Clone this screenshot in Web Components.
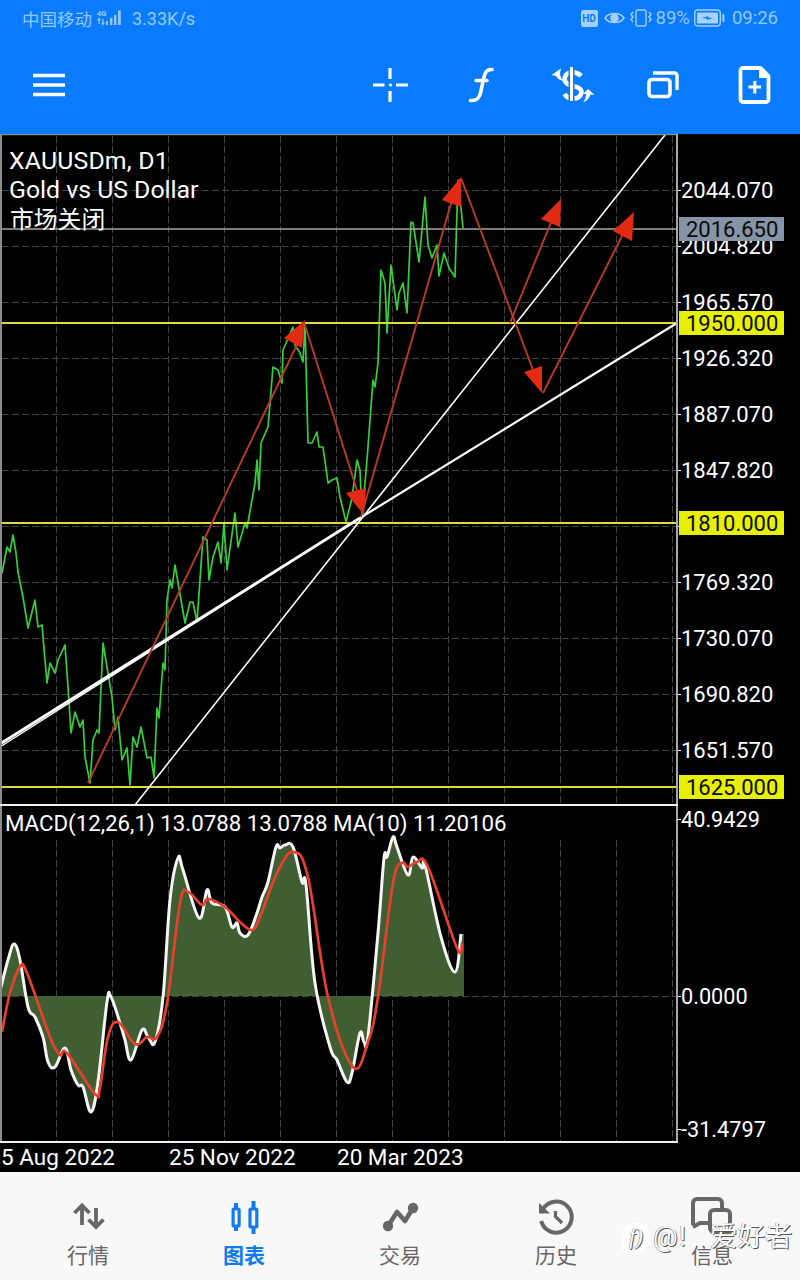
<!DOCTYPE html>
<html lang="zh">
<head>
<meta charset="utf-8">
<title>MT5 XAUUSD</title>
<style>
html,body{margin:0;padding:0;background:#000}
body{width:800px;height:1280px;overflow:hidden;font-family:Roboto,"Noto Sans CJK SC",sans-serif}
mt-app{display:flex}
</style>
</head>
<body>
<mt-app>
  <status-bar></status-bar>
  <tool-bar></tool-bar>
  <chart-view>
    <price-panel>
      <span>XAUUSDm, D1</span><span>Gold vs US Dollar</span><span>市场关闭</span>
    </price-panel>
    <macd-panel></macd-panel>
    <time-axis></time-axis>
  </chart-view>
  <nav-bar>
    <nav-item label="行情"><svg viewBox="0 0 44 36" width="44" height="36" fill="none" stroke="currentColor" stroke-width="3.800"><path d="M16 7V26M8.500 14L16 6.500L23.500 14"/><path d="M30 9V28M22.500 20.500L30 28L37.500 20.500"/></svg></nav-item>
    <nav-item label="图表" active><svg viewBox="0 0 44 36" width="44" height="36" fill="none" stroke="currentColor"><g stroke-width="3.200"><rect x="11.100" y="10" width="6" height="17" rx="1"/><rect x="28" y="10" width="6.800" height="18" rx="1"/></g><path stroke-width="4" d="M14 4V10M14 27V32M31.500 2V10M31.500 28V35"/></svg></nav-item>
    <nav-item label="交易"><svg viewBox="0 0 44 36" width="44" height="36" fill="none" stroke="currentColor" stroke-width="4.600"><path d="M10 27L19 13L27 22L35 9" stroke-linejoin="round"/><circle cx="10" cy="27" r="5.200" fill="currentColor" stroke="none"/><circle cx="35" cy="9" r="5.200" fill="currentColor" stroke="none"/></svg></nav-item>
    <nav-item label="历史"><svg viewBox="0 0 44 36" width="44" height="36" fill="none" stroke="currentColor" stroke-width="4"><path d="M9 10A15.500 15.500 0 1 1 7.200 22"/><path d="M5 4V14.500H16Z" fill="currentColor" stroke="none"/><path d="M21.500 12V17.500L28 24" stroke-width="3.200"/></svg></nav-item>
    <nav-item label="信息"><svg viewBox="0 0 44 36" width="44" height="36" style="overflow:visible" fill="none" stroke="currentColor" stroke-width="4" stroke-linejoin="round"><path d="M3 26V4a4 4 0 0 1 4-4H28a4 4 0 0 1 4 4V9"/><path d="M3 28L10 24H18"/><path d="M20 15a4 4 0 0 1 4-4H36a4 4 0 0 1 4 4V33H24a4 4 0 0 1-4-4Z"/></svg></nav-item>
    <water-mark></water-mark>
  </nav-bar>
</mt-app>

<script>
const CJK='Roboto,"Noto Sans CJK SC",sans-serif';

class StatusBar extends HTMLElement{
  constructor(){super();this.attachShadow({mode:'open'}).innerHTML=`
  <style>
    :host{display:flex;align-items:center;justify-content:space-between;height:40px;padding:0 22px 4px;box-sizing:border-box;color:#96c8ff;font:17.500px ${CJK};background:#087bff}
    .g{display:flex;align-items:center}
    svg{display:block}
    .sig{margin:0 9px 0 3px}
    .spd{font-size:18px}
    .hd{width:17px;height:17px;border-radius:2px;background:#a5d0ff;color:#087bff;font:700 10px/17px Roboto,sans-serif;text-align:center;margin-right:6px}
    .pct{font-size:18.500px;margin:0 4px 0 4px}
    .time{font-size:18.500px;margin-left:7px}
  </style>
  <div class="g">
    <span>中国移动</span>
    <svg class="sig" width="28" height="18" viewBox="0 0 28 18"><text x="2" y="7" font-size="7.500" font-weight="700" font-family="Roboto" fill="#96c8ff">4G</text><path d="M4 15V10M2.500 11.500L4 9.500L5.500 11.500M8 10V15M6.500 13.500L8 15.500L9.500 13.500" stroke="#96c8ff" fill="none" stroke-width="1.200"/><path d="M11 12h2v4h-2zM15 9h2.400v7H15zM19 6h2.400v10H19zM23 1.500h2.800V16H23z" fill="#96c8ff"/></svg>
    <span class="spd">3.33K/s</span>
  </div>
  <div class="g">
    <div class="hd">HD</div>
    <svg width="21" height="14" viewBox="0 0 21 14" fill="none" stroke="#a5d0ff" stroke-width="1.500"><path d="M1 7C5 1 16 1 20 7C16 13 5 13 1 7Z"/><circle cx="10.500" cy="7" r="3.500" fill="#a5d0ff"/></svg>
    <svg width="22" height="18" viewBox="0 0 22 18" style="margin-left:5px" fill="none" stroke="#a5d0ff" stroke-width="1.400"><rect x="6" y="1" width="10" height="16" rx="2"/><path d="M3 3L1 5.500L3 8L1 10.500L3 13M19 3L21 5.500L19 8L21 10.500L19 13"/></svg>
    <span class="pct">89%</span>
    <svg width="31" height="18" viewBox="0 0 31 18" fill="none"><rect x=".7" y="1" width="25.600" height="16" rx="3" stroke="#a5d0ff" stroke-width="1.400"/><rect x="3" y="3.500" width="21" height="11" rx="1" fill="#a5d0ff"/><path d="M8 9L14 7V8.500L19 9L13 11V9.500Z" fill="#087bff"/><rect x="28.400" y="5" width="2" height="8" rx="1" fill="#a5d0ff"/></svg>
    <span class="time">09:26</span>
  </div>`}
}
customElements.define('status-bar',StatusBar);

class ToolBar extends HTMLElement{
  constructor(){super();this.attachShadow({mode:'open'}).innerHTML=`
  <style>
    :host{display:block;height:94px;background:#087bff}
    svg{display:block}
  </style>
  <svg width="800" height="94" viewBox="0 40 800 94" fill="none" stroke="#fff">
    <path stroke-width="3.400" d="M33 75.500H65M33 85H65M33 94.500H65"/>
    <path stroke-width="3.200" d="M390 68V79M390 91V102M373 85H384.500M396 85H408"/>
    <circle cx="390.500" cy="85" r="1.600" fill="#fff" stroke="none"/>
    <path stroke-width="3.600" stroke-linecap="round" d="M492 69.500C487 69 485 72 484 77L480.500 93C479 99 476 101 470.500 100.500M476 80.500H487"/>
    <path stroke-width="4.600" d="M581 76C577 71 567 71 565 77C563 83 569 85 573 86C578 87 583 89 581 94C579 100 568 100 564.500 94"/>
    <path stroke-width="6" stroke="#087bff" d="M571.500 66V104"/>
    <path stroke-width="3" d="M571.500 67V101"/>
    <path fill="#fff" stroke="none" d="M551.500 75L561 68.500L560 73C560 76 561 78 563 81C559 80 557 78 556 76Z"/>
    <path fill="#fff" stroke="none" d="M588 89L594.500 95L590.500 94.500C590 97 587 101 583 102.500C585 100 586 97 586 94L583 94Z"/>
    <rect x="649" y="79.500" width="21" height="17" rx="3" stroke-width="3.600"/>
    <path stroke-width="3.400" d="M653 73H674.500A2.500 2.500 0 0 1 677 75.500V90"/>
    <path stroke-width="3.800" stroke-linejoin="round" d="M743 68H760.500L768.500 76.500V99.500A2.500 2.500 0 0 1 766 102H743A2.500 2.500 0 0 1 740.500 99.500V70.500A2.500 2.500 0 0 1 743 68Z"/>
    <path fill="#fff" stroke="none" d="M759 67H762L770 75V78H759Z"/>
    <path stroke-width="3" d="M748.500 87H761M754.800 81V93.500"/>
  </svg>`}
}
customElements.define('tool-bar',ToolBar);

class MtApp extends HTMLElement{
  constructor(){super();this.attachShadow({mode:'open'}).innerHTML=`
  <style>:host{display:flex;flex-direction:column;width:800px;height:1280px;background:#000}</style><slot></slot>`}
}
customElements.define('mt-app',MtApp);

class ChartView extends HTMLElement{
  constructor(){super();this.attachShadow({mode:'open'}).innerHTML=`
  <style>:host{display:flex;flex-direction:column;height:1038px;background:#000;color:#fff}</style><slot></slot>`}
}
customElements.define('chart-view',ChartView);

const GRIDX=[56,112,168,224,280,336,392,448,504,560,616,672];
function vgrid(y1,y2){return GRIDX.map(x=>`<path d="M${x+.5} ${y1}V${y2}"/>`).join('')}
function smooth(p){
  let d=`M${p[0][0]} ${p[0][1]}`;
  for(let i=0;i<p.length-1;i++){
    const a=p[Math.max(i-1,0)],b=p[i],c=p[i+1],e=p[Math.min(i+2,p.length-1)],t=5.5;
    d+=`C${(b[0]+(c[0]-a[0])/t).toFixed(1)} ${(b[1]+(c[1]-a[1])/t).toFixed(1)} ${(c[0]-(e[0]-b[0])/t).toFixed(1)} ${(c[1]-(e[1]-b[1])/t).toFixed(1)} ${c[0]} ${c[1]}`;
  }
  return d;
}

const GREEN=[[2,573],[7,547],[10,552],[13,535],[16,553],[18,572],[23,597],[28,628],[35,600],[38,627],[42,625],[47,683],[50,663],[55,673],[58,660],[65,645],[68,687],[71,733],[75,712],[80,727],[83,720],[85,757],[90,783],[93,740],[97,730],[99,733],[103,643],[108,673],[112,697],[115,730],[118,717],[122,760],[127,748],[130,785],[133,737],[137,747],[141,727],[147,758],[151,757],[154,778],[157,708],[159,718],[163,663],[165,670],[167,600],[170,580],[172,588],[175,565],[185,623],[190,602],[193,602],[197,622],[203,537],[207,540],[209,580],[213,557],[218,542],[221,563],[224,523],[227,570],[235,513],[238,547],[245,523],[247,528],[255,483],[257,460],[259,490],[261,443],[268,427],[273,367],[278,370],[282,383],[283,350],[293,327],[295,345],[300,353],[303,362],[305,323],[308,443],[312,443],[317,432],[319,447],[323,447],[328,483],[332,480],[337,478],[340,497],[346,522],[352,498],[357,460],[360,470],[362,517],[367,460],[373,380],[375,387],[378,363],[381,270],[385,283],[387,333],[391,265],[397,310],[399,293],[403,283],[407,313],[411,222],[413,223],[419,262],[425,197],[428,245],[432,258],[437,245],[439,276],[444,253],[449,268],[455,277],[458,180],[463,228]];

class PricePanel extends HTMLElement{
  constructor(){super();
    const labels=[[2044.07,190],[2004.82,246],[1965.57,302],[1926.32,358],[1887.07,414],[1847.82,470],[1769.32,582],[1730.07,638],[1690.82,694],[1651.57,750]];
    const tags=[['2016.650',229,'#8594a6'],['1950.000',323,'#e6f000'],['1810.000',523,'#e6f000'],['1625.000',787,'#e6f000']];
    const hg=[190,246,302,358,414,470,526,582,638,694,750].map(y=>`<path d="M2 ${y+.5}H677"/>`).join('');
    const ticks=[190,246,302,358,414,470,526,582,638,694,750].map(y=>`<path d="M678 ${y+.5}H681"/>`).join('');
    const arrow=(l,t)=>`<path d="M${l}" stroke="#b93a2a" stroke-width="1.900" fill="none"/><polygon points="${t}" fill="#e42a12"/>`;
    this.attachShadow({mode:'open'}).innerHTML=`
    <style>
      :host{display:block;position:relative;height:672px;overflow:hidden}
      svg{display:block;position:absolute;left:0;top:0}
      .legend{position:absolute;left:9px;top:13px;display:flex;flex-direction:column;font:24.800px/28.500px ${CJK};color:#fff}
      ::slotted(span){display:block}
      ::slotted(span:first-child){letter-spacing:.2px}
      ::slotted(span:last-child){font-size:23.800px;margin:2px 0 0 1px}
      text{font-family:Roboto,sans-serif;font-size:22px}
    </style>
    <svg width="800" height="672" viewBox="0 134 800 672" fill="none">
      <g stroke="#444" stroke-width="1" stroke-dasharray="7 3">${vgrid(136,804)}${hg}</g>
      <polyline points="${GREEN.join(' ')}" stroke="#35cf3a" stroke-width="1.700" stroke-linejoin="round"/>
      <path d="M2 229H677" stroke="#a6a6a6" stroke-width="1.500"/>
      <g stroke="#dcdc3c" stroke-width="2"><path d="M2 323H677M2 523H677M2 787H677"/></g>
      <path d="M360 518L677 323" stroke="#fff" stroke-width="2.200"/>
      <path d="M0 744L360 518" stroke="#fff" stroke-width="2.800"/>
      <path d="M0 747L360 518" stroke="#fff" stroke-width="1.400"/>
      <path d="M135 805L665 135" stroke="#fff" stroke-width="1.600"/>
      ${arrow('88 783L303 332',"305,320 284,338 302,348")}
      ${arrow('304 322L360 500',"364,515 346,493 366,488")}
      ${arrow('361 517L452 200',"461,177 442,200 461,207")}
      ${arrow('461 178L536 378',"542,393 524,372 542,366")}
      ${arrow('510 323L552 220',"561,199 541,219 560,227")}
      ${arrow('543 393L624 232',"634,212 613,231 632,241")}
      <path d="M1 134V806" stroke="#8c8c8c" stroke-width="2"/>
      <path d="M0 134.500H678" stroke="#8c8c8c" stroke-width="1.600"/>
      <path d="M677 134V806" stroke="#a8a8a8" stroke-width="2"/>
      <path d="M0 805H678" stroke="#f0f0f0" stroke-width="2"/>
      <g stroke="#fff" stroke-width="1">${ticks}</g>
      <g fill="#fff">${labels.map(([v,y])=>`<text x="681" y="${y+8}">${v.toFixed(3)}</text>`).join('')}</g>
      ${tags.map(([v,y,c])=>`<rect x="679" y="${y-12}" width="105" height="24" fill="${c}"/><text x="686" y="${y+8}" fill="#0b0b0b">${v}</text>`).join('')}
    </svg>
    <div class="legend"><slot></slot></div>`}
}
customElements.define('price-panel',PricePanel);

const WHITE=[[0,990],[2,983],[8,960],[14,944],[20,960],[28,1007],[35,1017],[43,1037],[48,1062],[55,1067],[65,1048],[71,1070],[78,1085],[83,1087],[91,1112],[98,1082],[107,1002],[111,997],[120,1023],[125,1040],[131,1060],[142,1030],[148,1037],[155,1042],[163,997],[170,900],[178,858],[183,870],[199,918],[207,890],[212,903],[225,907],[232,927],[237,923],[240,933],[248,935],[257,913],[262,897],[268,882],[276,847],[280,848],[285,845],[293,847],[302,882],[306,885],[315,983],[330,1047],[337,1060],[347,1082],[352,1073],[360,1033],[364,1042],[368,1037],[378,933],[384,858],[387,857],[393,837],[397,847],[408,875],[413,857],[422,868],[425,865],[441,937],[455,972],[461,934]];
const RED=[[2,1032],[10,993],[20,967],[27,973],[50,1037],[60,1055],[67,1053],[95,1094],[100,1087],[108,1037],[118,1022],[135,1044],[147,1037],[157,1037],[167,1003],[180,903],[188,892],[202,905],[208,899],[225,907],[240,922],[252,930],[260,917],[277,873],[293,852],[308,877],[328,997],[353,1067],[368,1042],[378,997],[393,883],[402,863],[408,867],[417,862],[428,867],[457,948],[462,943]];

class MacdPanel extends HTMLElement{
  constructor(){super();
    const w=smooth(WHITE);
    this.attachShadow({mode:'open'}).innerHTML=`
    <style>
      :host{display:block;height:335px}
      svg{display:block}
      text{font-family:Roboto,sans-serif;fill:#fff}
    </style>
    <svg width="800" height="335" viewBox="0 806 800 335" fill="none">
      <g stroke="#444" stroke-width="1" stroke-dasharray="7 3">${vgrid(840,1141)}<path d="M2 996.500H677"/></g>
      <path d="${w}L464 934L464 996H0Z" fill="#3f5f33"/>
      <path d="${w}" stroke="#f5f5f5" stroke-width="3" stroke-linejoin="round"/>
      <path d="${smooth(RED)}" stroke="#e8402c" stroke-width="2.700"/>
      <path d="M1 806V1141" stroke="#8c8c8c" stroke-width="2"/>
      <path d="M677 806V1141" stroke="#a8a8a8" stroke-width="2"/>
      <path d="M678 819.500H681M678 996.500H681M678 1129.500H681" stroke="#fff"/>
      <text x="5" y="831" font-size="22.250">MACD(12,26,1) 13.0788 13.0788 MA(10) 11.20106</text>
      <text x="681" y="826.500" font-size="21.700">40.9429</text>
      <text x="681" y="1004" font-size="21.700">0.0000</text>
      <text x="681" y="1137" font-size="21.700">-31.4797</text>
    </svg>`}
}
customElements.define('macd-panel',MacdPanel);

class TimeAxis extends HTMLElement{
  constructor(){super();this.attachShadow({mode:'open'}).innerHTML=`
  <style>
    :host{display:grid;grid-template-columns:168px 168px 168px 1fr;height:31px;box-sizing:border-box;border-top:2px solid #f0f0f0;font:22.500px/29px Roboto,sans-serif;color:#fff;width:678px;padding-left:1px}
  </style>
  <span>5 Aug 2022</span><span>25 Nov 2022</span><span>20 Mar 2023</span>`}
}
customElements.define('time-axis',TimeAxis);

class NavBar extends HTMLElement{
  constructor(){super();this.attachShadow({mode:'open'}).innerHTML=`
  <style>
    :host{display:flex;position:relative;height:108px;background:#f8f8f8;padding:0 10px;box-sizing:border-box}
  </style><slot></slot>`}
}
customElements.define('nav-bar',NavBar);

class NavItem extends HTMLElement{
  constructor(){super();this.attachShadow({mode:'open'}).innerHTML=`
  <style>
    :host{flex:1 1 0;display:flex;flex-direction:column;align-items:center;color:#676767;font:21px/28px ${CJK};padding-top:27px}
    :host([active]){color:#0f7bf0;font-weight:700}
    .ic{height:36px;margin-bottom:7px}
    ::slotted(svg){display:block}
  </style>
  <div class="ic"><slot></slot></div><span>${this.getAttribute('label')||''}</span>`}
}
customElements.define('nav-item',NavItem);

class WaterMark extends HTMLElement{
  constructor(){super();this.attachShadow({mode:'open'}).innerHTML=`
  <style>
    :host{position:absolute;left:622px;top:49px;display:flex;align-items:center;color:#fff;font:27.500px/32px ${CJK};text-shadow:1px 1px 0 #555,-.5px 0 0 #777}
    .logo{width:28px;height:28px;border-radius:12px 12px 12px 3px;background:#fff;display:flex;align-items:center;justify-content:center;font:italic 23px/28px "Liberation Serif",serif;white-space:nowrap}
    .at{margin-left:3px;width:57px;letter-spacing:1px}
  </style>
  <div class="logo">f)</div><span class="at">@!</span><span>爱好者</span>`}
}
customElements.define('water-mark',WaterMark);
</script>
</body>
</html>
